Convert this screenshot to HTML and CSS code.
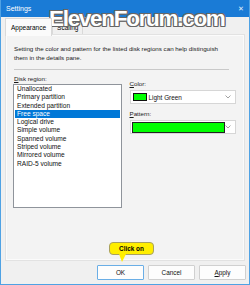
FILE: index.html
```html
<!DOCTYPE html>
<html lang="en">
<head>
    <meta charset="UTF-8">
    <title>Settings</title>
    <link rel="stylesheet" href="styles.css">
</head>
<body>
    <div class="window">
        <div class="titlebar">
            <span class="title">Settings</span>
            <span class="close">&#x2715;</span>
        </div>

        <div class="tabs">
            <div class="tab active">Appearance</div>
            <div class="tab">Scaling</div>
        </div>

        <div class="panel">
            <p class="desc">Setting the color and pattern for the listed disk regions can help distinguish<br>them in the details pane.</p>
            <div class="sep"></div>

            <div class="columns">
                <div class="col-left">
                    <div class="label"><u>D</u>isk region:</div>
                    <ul class="listbox">
                        <li>Unallocated</li>
                        <li>Primary partition</li>
                        <li>Extended partition</li>
                        <li class="selected">Free space</li>
                        <li>Logical drive</li>
                        <li>Simple volume</li>
                        <li>Spanned volume</li>
                        <li>Striped volume</li>
                        <li>Mirrored volume</li>
                        <li>RAID-5 volume</li>
                    </ul>
                </div>

                <div class="col-right">
                    <div class="label"><u>C</u>olor:</div>
                    <div class="combo">
                        <span class="swatch"></span>
                        <span class="combo-text">Light Green</span>
                        <svg class="chevron" width="6" height="4" viewBox="0 0 6 4"><path d="M0.5 0.5 L3 3 L5.5 0.5" fill="none" stroke="#8a8a8a" stroke-width="0.8"/></svg>
                    </div>

                    <div class="label"><u>P</u>attern:</div>
                    <div class="combo">
                        <span class="pattern-bar"></span>
                        <svg class="chevron" width="6" height="4" viewBox="0 0 6 4"><path d="M0.5 0.5 L3 3 L5.5 0.5" fill="none" stroke="#8a8a8a" stroke-width="0.8"/></svg>
                    </div>
                </div>
            </div>
        </div>

        <div class="buttons">
            <button class="btn default">OK</button>
            <button class="btn">Cancel</button>
            <button class="btn"><u>A</u>pply</button>
        </div>

        <!-- overlays -->
        <div class="watermark">ElevenForum.com</div>
        <div class="callout">Click on</div>
    </div>
</body>
</html>
```

FILE: styles.css
```css
body, html {
    margin: 0;
    padding: 0;
    background-color: #f0f0f0;
    font-family: 'Liberation Sans', Arial, sans-serif;
}

.window {
    position: relative;
    width: 250px;
    height: 285px;
    box-sizing: border-box;
    border: 1px solid #4fa2e4;
    border-top: none;
    background-color: #f0f0f0;
    overflow: hidden;
}

.titlebar {
    display: flex;
    align-items: center;
    justify-content: space-between;
    height: 17px;
    padding: 0 5px 0 5px;
    background-color: #1a7bd6;
    color: #fff;
}

.title {
    font-size: 7px;
}

.close {
    font-size: 7px;
    color: #e6f0fa;
}

.tabs {
    display: flex;
    align-items: flex-end;
    height: 18px;
    padding-left: 4px;
}

.tab {
    font-size: 6.5px;
    color: #000;
    border: 1px solid #d9d9d9;
    border-bottom: none;
    background-color: #f0f0f0;
    height: 14px;
    line-height: 14px;
    padding: 0 4px;
}

.tab.active {
    background-color: #fbfbfb;
    height: 17px;
    line-height: 18px;
    padding: 0 5px;
    margin-bottom: -1px;
    position: relative;
    z-index: 1;
}

.panel {
    margin: 0 5px;
    height: 225px;
    box-sizing: border-box;
    border: 1px solid #fbfbfb;
    outline: 1px solid #e2e2e2;
    background-color: #f3f3f3;
    padding: 8px 7px 0 7px;
}

.desc {
    margin: 0;
    font-size: 6.2px;
    line-height: 9px;
    color: #1a1a1a;
}

.sep {
    height: 1px;
    width: 215px;
    background-color: #c9c9c9;
    margin: 7px 0 5px 0;
}

.columns {
    display: flex;
    gap: 8px;
}

.label {
    font-size: 6.2px;
    line-height: 8px;
    color: #1a1a1a;
}

.col-left {
    width: 109px;
    margin-left: -1px;
}

.col-left .label {
    margin-left: 1px;
    margin-bottom: 1px;
}

.listbox {
    list-style: none;
    margin: 0;
    padding: 0;
    height: 124px;
    box-sizing: border-box;
    border: 1px solid #8f949b;
    background-color: #fff;
}

.listbox li {
    font-size: 6.6px;
    line-height: 8.3px;
    padding-left: 2px;
    margin: 0 1px;
    color: #111;
}

.listbox li.selected {
    background-color: #0078d7;
    color: #fff;
}

.col-right {
    width: 107px;
    padding-top: 5px;
}

.combo {
    display: flex;
    align-items: center;
    height: 14px;
    box-sizing: border-box;
    border: 1px solid #d6d6d6;
    background-color: #fff;
    padding-left: 1px;
    margin: 2px 0 6px 0;
    position: relative;
}

.swatch {
    width: 14px;
    height: 8px;
    box-sizing: border-box;
    border: 1px solid #111;
    background-color: #00ff00;
    margin-left: 1px;
}

.combo-text {
    font-size: 6.4px;
    margin-left: 2px;
    color: #111;
}

.chevron {
    position: absolute;
    right: 4px;
    top: 4px;
}

.pattern-bar {
    width: 93px;
    height: 11px;
    box-sizing: border-box;
    border: 1px solid #222;
    background-color: #00ff00;
}

.buttons {
    display: flex;
    justify-content: flex-end;
    gap: 4px;
    padding-right: 3px;
    margin-top: 5px;
}

.btn {
    width: 47px;
    height: 15px;
    padding: 0;
    font-family: 'Liberation Sans', Arial, sans-serif;
    font-size: 6.4px;
    color: #111;
    border: 1px solid #d0d0d0;
    border-radius: 1px;
    background-color: #fdfdfd;
}

.btn.default {
    border-color: #6aaee6;
}

.watermark {
    position: absolute;
    left: 48px;
    top: 6px;
    font-family: 'Liberation Sans', Arial, sans-serif;
    font-weight: bold;
    font-size: 22.5px;
    letter-spacing: -1.3px;
    color: #fff;
    text-shadow: 1px 0 0 #666, -1px 0 0 #666, 0 1px 0 #666, 0 -1px 0 #666,
                 1px 1px 0 #666, -1px -1px 0 #666, 1px -1px 0 #666, -1px 1px 0 #666;
}

.callout {
    position: absolute;
    left: 108px;
    top: 242px;
    width: 45px;
    height: 13px;
    box-sizing: border-box;
    background-color: #ffee00;
    border: 1px solid #a8a060;
    border-radius: 4px;
    font-size: 6.4px;
    font-weight: bold;
    line-height: 11px;
    text-align: center;
    color: #000;
}

.callout::after {
    content: "";
    position: absolute;
    left: 9px;
    bottom: -8px;
    border-left: 3px solid transparent;
    border-right: 4px solid transparent;
    border-top: 8px solid #ffee00;
}
```
